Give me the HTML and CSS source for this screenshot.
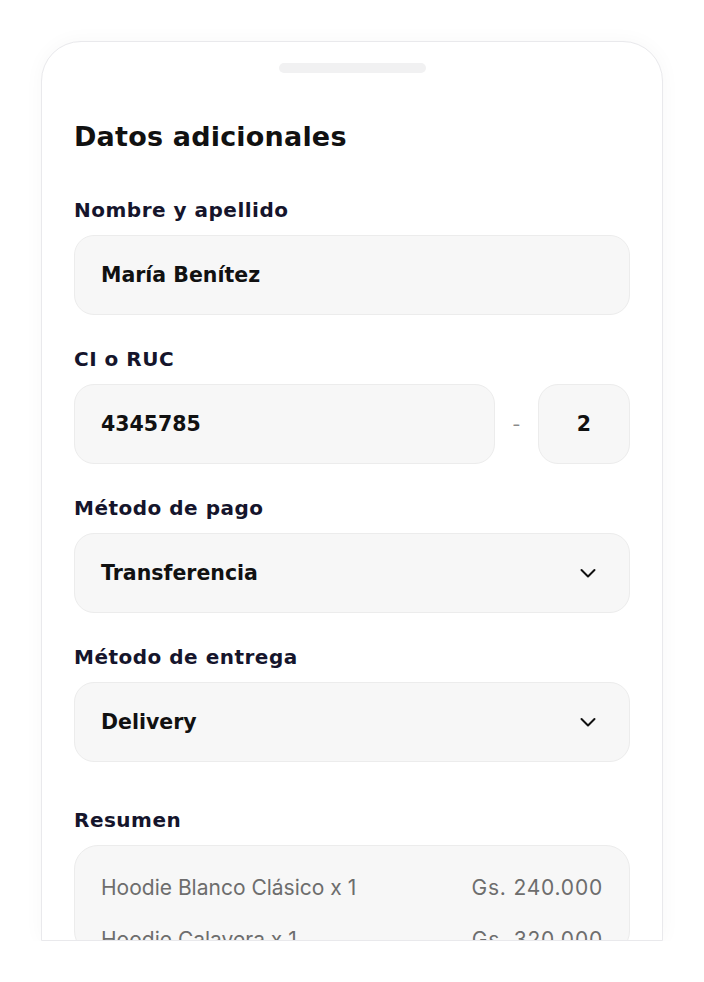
FILE: index.html
```html
<!DOCTYPE html>
<html lang="es">
<head>
<meta charset="utf-8">
<title>Datos adicionales</title>
<link rel="stylesheet" href="styles.css">
</head>
<body>
<div class="sheet">
  <div class="handle"></div>
  <h1 class="title">Datos adicionales</h1>

  <div class="field first">
    <div class="label">Nombre y apellido</div>
    <div class="input">María Benítez</div>
  </div>

  <div class="field">
    <div class="label">CI o RUC</div>
    <div class="ruc-row">
      <div class="input grow">4345785</div>
      <span class="dash">-</span>
      <div class="input dv">2</div>
    </div>
  </div>

  <div class="field">
    <div class="label">Método de pago</div>
    <div class="input select">
      <span>Transferencia</span>
      <svg class="chev" width="20" height="20" viewBox="0 0 20 20"><path d="M3.5 7l6.5 6.5 6.5-6.5" fill="none" stroke="#111" stroke-width="2" stroke-linecap="round" stroke-linejoin="round"/></svg>
    </div>
  </div>

  <div class="field">
    <div class="label">Método de entrega</div>
    <div class="input select">
      <span>Delivery</span>
      <svg class="chev" width="20" height="20" viewBox="0 0 20 20"><path d="M3.5 7l6.5 6.5 6.5-6.5" fill="none" stroke="#111" stroke-width="2" stroke-linecap="round" stroke-linejoin="round"/></svg>
    </div>
  </div>

  <div class="field summary-field">
    <div class="label">Resumen</div>
    <div class="summary">
      <div class="row"><span>Hoodie Blanco Clásico x 1</span><span>Gs. 240.000</span></div>
      <div class="row"><span>Hoodie Calavera x 1</span><span>Gs. 320.000</span></div>
    </div>
  </div>
</div>
</body>
</html>
```

FILE: styles.css
```css
* { box-sizing: border-box; }
html, body { margin: 0; background: #ffffff; }
body {
  padding: 41px 41px 0 41px;
  font-family: Inter, "Noto Sans", sans-serif;
  color: #0f0f1a;
}
.sheet {
  width: 622px;
  height: 900px;
  overflow: hidden;
  background: #fff;
  border: 1px solid #e9e9ec;
  border-radius: 40px 40px 0 0;
  box-shadow: 0 0 20px rgba(0,0,0,0.035);
  padding: 21px 32px 0 32px;
  display: flex;
  flex-direction: column;
}
.handle {
  align-self: center;
  flex: 0 0 10px;
  width: 147px;
  height: 10px;
  border-radius: 5px;
  background: #f1f1f2;
}
.title {
  margin: 47px 0 0 0;
  font-family: "DejaVu Sans", sans-serif;
  font-size: 27px;
  line-height: 34px;
  font-weight: 700;
  color: #111;
  letter-spacing: 0.2px;
}
.field { display: flex; flex-direction: column; }
.label {
  font-family: "DejaVu Sans", sans-serif;
  font-size: 20px;
  line-height: 26px;
  font-weight: 700;
  color: #15152c;
  letter-spacing: 0.5px;
  margin-top: 31px;
  margin-bottom: 12px;
}
.first .label { margin-top: 43px; }
.input {
  height: 80px;
  background: #f7f7f7;
  border: 1px solid #ececec;
  border-radius: 20px;
  padding: 0 26px;
  display: flex;
  align-items: center;
  font-family: "DejaVu Sans", sans-serif;
  font-size: 20.5px;
  font-weight: 700;
  color: #111;
}
.ruc-row { display: flex; align-items: center; }
.grow { flex: 1; }
.dash {
  width: 43px;
  text-align: center;
  color: #8a8a8a;
  font-size: 18px;
}
.dv { width: 92px; justify-content: center; padding: 0; }
.select { justify-content: space-between; padding-right: 31px; }
.chev { display: block; }
.summary-field .label { margin-top: 45px; }
.summary {
  background: #f7f7f7;
  border: 1px solid #ececec;
  border-radius: 24px;
  padding: 28px 26px 0 26px;
  display: flex;
  flex-direction: column;
  gap: 24px;
}
.row {
  display: flex;
  justify-content: space-between;
  font-size: 21px;
  line-height: 28px;
  color: #6d6d6d;
  font-weight: 400;
}
.row span:last-child { letter-spacing: 0.8px; }
```
